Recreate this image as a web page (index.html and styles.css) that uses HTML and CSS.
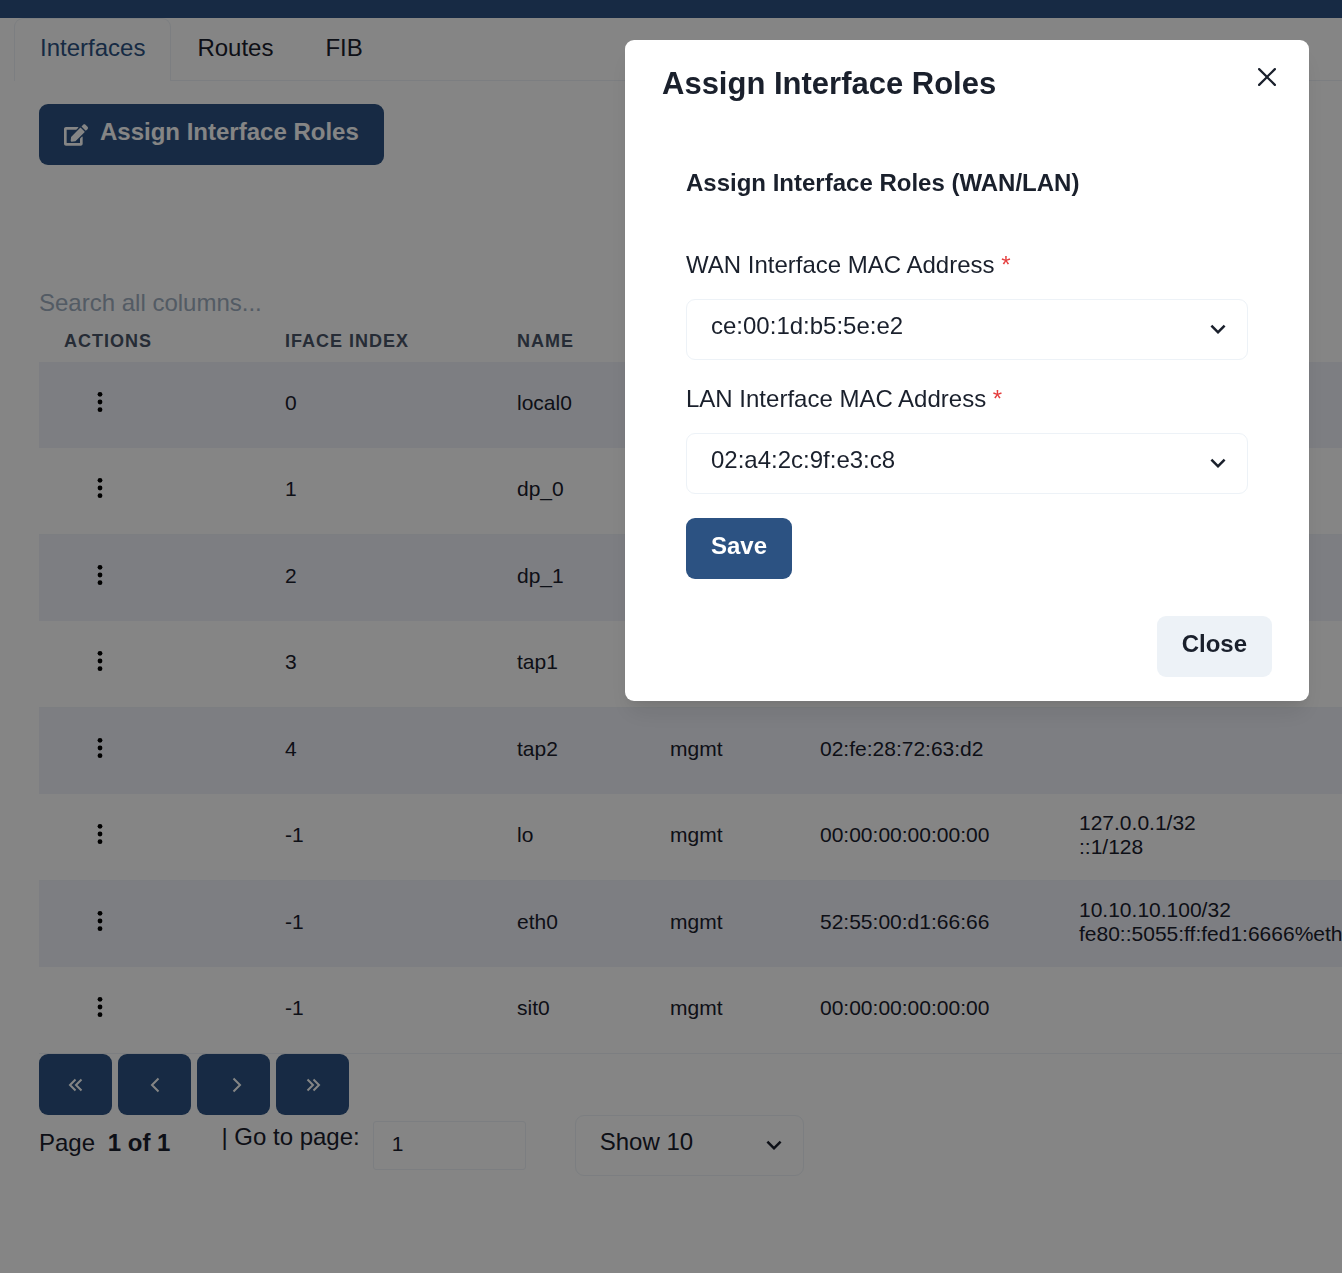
FILE: index.html
```html
<!DOCTYPE html>
<html lang="en">
<head>
    <meta charset="UTF-8">
    <meta name="viewport" content="width=device-width, initial-scale=1.0">
    <title>Interfaces</title>
    <link rel="stylesheet" href="styles.css">
</head>
<body>
    <!-- shared icons -->
    <svg class="icon-defs" aria-hidden="true">
        <symbol id="icon-chevron" viewBox="0 0 24 24">
            <path fill="currentColor" d="M16.59 8.59L12 13.17 7.41 8.59 6 10l6 6 6-6z"/>
        </symbol>
        <symbol id="icon-dots" viewBox="0 0 24 24">
            <circle cx="12" cy="4.3" r="2.4"/>
            <circle cx="12" cy="12" r="2.4"/>
            <circle cx="12" cy="19.7" r="2.4"/>
        </symbol>
    </svg>

    <header class="topbar"></header>

    <main class="page">
        <div class="tabs" role="tablist">
            <button class="tab active" role="tab" aria-selected="true">Interfaces</button>
            <button class="tab" role="tab" aria-selected="false">Routes</button>
            <button class="tab" role="tab" aria-selected="false">FIB</button>
        </div>

        <div class="panel">
            <button class="btn btn-primary">
                <svg class="edit-icon" viewBox="0 0 576 512"><path fill="currentColor" d="M402.6 83.2l90.2 90.2c3.8 3.8 3.8 10 0 13.8L274.4 405.6l-92.8 10.3c-12.4 1.4-22.9-9.1-21.5-21.5l10.3-92.8L388.8 83.2c3.8-3.8 10-3.8 13.8 0zm162-22.9l-48.8-48.8c-15.2-15.2-39.9-15.2-55.2 0l-35.4 35.4c-3.8 3.8-3.8 10 0 13.8l90.2 90.2c3.8 3.8 10 3.8 13.8 0l35.4-35.4c15.2-15.3 15.2-40 0-55.2zM384 346.2V448H64V128h229.8c3.2 0 6.2-1.3 8.5-3.5l40-40c7.6-7.6 2.2-20.5-8.5-20.5H48C21.5 64 0 85.5 0 112v352c0 26.5 21.5 48 48 48h352c26.5 0 48-21.5 48-48V306.2c0-10.7-12.9-16-20.5-8.5l-40 40c-2.2 2.3-3.5 5.3-3.5 8.5z"/></svg>
                <span class="btn-text">Assign Interface Roles</span>
            </button>

            <input class="search" type="text" placeholder="Search all columns..." aria-label="Search all columns">

            <table class="iface-table">
                <colgroup>
                    <col class="col-actions">
                    <col class="col-index">
                    <col class="col-name">
                    <col class="col-type">
                    <col class="col-mac">
                    <col class="col-ip">
                </colgroup>
                <thead>
                    <tr>
                        <th>Actions</th>
                        <th>Iface Index</th>
                        <th>Name</th>
                        <th>Type</th>
                        <th>MAC</th>
                        <th>IP</th>
                    </tr>
                </thead>
                <tbody>
                    <tr>
                        <td><button class="menu-btn" aria-label="Actions"><svg><use href="#icon-dots"/></svg></button></td>
                        <td>0</td>
                        <td>local0</td>
                        <td></td>
                        <td></td>
                        <td></td>
                    </tr>
                    <tr>
                        <td><button class="menu-btn" aria-label="Actions"><svg><use href="#icon-dots"/></svg></button></td>
                        <td>1</td>
                        <td>dp_0</td>
                        <td></td>
                        <td></td>
                        <td></td>
                    </tr>
                    <tr>
                        <td><button class="menu-btn" aria-label="Actions"><svg><use href="#icon-dots"/></svg></button></td>
                        <td>2</td>
                        <td>dp_1</td>
                        <td></td>
                        <td></td>
                        <td></td>
                    </tr>
                    <tr>
                        <td><button class="menu-btn" aria-label="Actions"><svg><use href="#icon-dots"/></svg></button></td>
                        <td>3</td>
                        <td>tap1</td>
                        <td></td>
                        <td></td>
                        <td></td>
                    </tr>
                    <tr>
                        <td><button class="menu-btn" aria-label="Actions"><svg><use href="#icon-dots"/></svg></button></td>
                        <td>4</td>
                        <td>tap2</td>
                        <td>mgmt</td>
                        <td>02:fe:28:72:63:d2</td>
                        <td></td>
                    </tr>
                    <tr>
                        <td><button class="menu-btn" aria-label="Actions"><svg><use href="#icon-dots"/></svg></button></td>
                        <td>-1</td>
                        <td>lo</td>
                        <td>mgmt</td>
                        <td>00:00:00:00:00:00</td>
                        <td>127.0.0.1/32<br>::1/128</td>
                    </tr>
                    <tr>
                        <td><button class="menu-btn" aria-label="Actions"><svg><use href="#icon-dots"/></svg></button></td>
                        <td>-1</td>
                        <td>eth0</td>
                        <td>mgmt</td>
                        <td>52:55:00:d1:66:66</td>
                        <td>10.10.10.100/32<br>fe80::5055:ff:fed1:6666%eth0</td>
                    </tr>
                    <tr>
                        <td><button class="menu-btn" aria-label="Actions"><svg><use href="#icon-dots"/></svg></button></td>
                        <td>-1</td>
                        <td>sit0</td>
                        <td>mgmt</td>
                        <td>00:00:00:00:00:00</td>
                        <td></td>
                    </tr>
                </tbody>
            </table>

            <div class="pager-buttons">
                <button class="btn btn-primary pager-btn" aria-label="First page"><svg viewBox="0 0 24 24"><path d="M11.5 6.5L6 12l5.5 5.5M17.5 6.5L12 12l5.5 5.5"/></svg></button>
                <button class="btn btn-primary pager-btn" aria-label="Previous page"><svg viewBox="0 0 24 24"><path d="M15.5 5.5L9 12l6.5 6.5"/></svg></button>
                <button class="btn btn-primary pager-btn" aria-label="Next page"><svg viewBox="0 0 24 24"><path d="M11.5 5.5L18 12l-6.5 6.5"/></svg></button>
                <button class="btn btn-primary pager-btn" aria-label="Last page"><svg viewBox="0 0 24 24"><path d="M6.5 6.5L12 12l-5.5 5.5M12.5 6.5L18 12l-5.5 5.5"/></svg></button>
            </div>

            <div class="pager">
                <span class="page-count">Page <strong>1 of 1</strong></span>
                <label class="goto-label" for="goto">| Go to page:</label>
                <input class="goto-input" id="goto" type="text" value="1">
                <div class="select-wrap page-size">
                    <select aria-label="Page size">
                        <option>Show 10</option>
                        <option>Show 20</option>
                        <option>Show 50</option>
                    </select>
                    <svg class="chevron"><use href="#icon-chevron"/></svg>
                </div>
            </div>
        </div>
    </main>

    <div class="overlay">
        <section class="modal" role="dialog" aria-modal="true" aria-labelledby="modal-title">
            <div class="modal-header">
                <h2 id="modal-title">Assign Interface Roles</h2>
                <button class="close-x" aria-label="Close dialog">
                    <svg viewBox="0 0 24 24"><path fill="currentColor" d="M.439,21.44a1.5,1.5,0,0,0,2.122,2.121L11.823,14.3a.25.25,0,0,1,.354,0l9.262,9.263a1.5,1.5,0,1,0,2.122-2.121L14.3,12.177a.25.25,0,0,1,0-.354l9.263-9.262A1.5,1.5,0,0,0,21.439.44L12.177,9.7a.25.25,0,0,1-.354,0L2.561.44A1.5,1.5,0,0,0,.439,2.561L9.7,11.823a.25.25,0,0,1,0,.354Z"/></svg>
                </button>
            </div>

            <form class="roles-form">
                <h3>Assign Interface Roles (WAN/LAN)</h3>

                <label for="wan">WAN Interface MAC Address <span class="required">*</span></label>
                <div class="select-wrap">
                    <select id="wan">
                        <option>ce:00:1d:b5:5e:e2</option>
                        <option>02:a4:2c:9f:e3:c8</option>
                    </select>
                    <svg class="chevron"><use href="#icon-chevron"/></svg>
                </div>

                <label for="lan">LAN Interface MAC Address <span class="required">*</span></label>
                <div class="select-wrap">
                    <select id="lan">
                        <option>02:a4:2c:9f:e3:c8</option>
                        <option>ce:00:1d:b5:5e:e2</option>
                    </select>
                    <svg class="chevron"><use href="#icon-chevron"/></svg>
                </div>

                <button class="btn btn-primary" type="button"><span class="btn-text">Save</span></button>
            </form>

            <div class="modal-footer">
                <button class="btn btn-light"><span class="btn-text">Close</span></button>
            </div>
        </section>
    </div>
</body>
</html>
```
FILE: styles.css
```css
:root {
    --primary: #2c5282;
    --text: #1a202c;
    --heading: #4a5568;
    --muted: #a0aec0;
    --border: #edf2f7;
    --stripe: #f0f2fa;
}

* {
    box-sizing: border-box;
}

body {
    margin: 0;
    font-family: "Liberation Sans", Arial, sans-serif;
    font-size: 24px;
    line-height: 36px;
    color: var(--text);
    background: white;
    overflow: hidden;
}

button, input, select {
    font: inherit;
    color: inherit;
    margin: 0;
}

button {
    cursor: pointer;
}

svg {
    display: block;
}

.icon-defs {
    position: absolute;
    width: 0;
    height: 0;
}

.topbar {
    height: 18px;
    background: var(--primary);
}

.page {
    padding-left: 14px;
    min-height: calc(100vh - 18px);
}

/* Tabs */
.tabs {
    display: flex;
    border-bottom: 1px solid var(--border);
}

.tab {
    padding: 11px 25px 15px;
    margin-bottom: -1px;
    background: none;
    border: 1px solid transparent;
    border-bottom: none;
    border-radius: 9px 9px 0 0;
}

.tab.active {
    color: var(--primary);
    background: white;
    border-color: var(--border);
}

.panel {
    padding: 23px 0 24px 25px;
}

/* Buttons */
.btn {
    display: inline-flex;
    align-items: center;
    justify-content: center;
    gap: 12px;
    height: 61px;
    padding: 0 25px;
    border: none;
    border-radius: 9px;
    font-weight: bold;
}

.btn-text {
    padding-bottom: 6px;
}

.btn-primary {
    background: var(--primary);
    color: white;
}

.btn-light {
    background: var(--border);
}

.edit-icon {
    width: 24px;
    height: 22px;
}

.search {
    display: block;
    width: 100%;
    margin-top: 120px;
    padding: 0;
    border: none;
    outline: none;
    background: none;
}

.search::placeholder {
    color: var(--muted);
    opacity: 1;
}

/* Interfaces table */
.iface-table {
    width: 100%;
    border-collapse: separate;
    border-spacing: 0;
    table-layout: fixed;
    font-size: 21px;
    line-height: 24px;
}

.col-actions { width: 221px; }
.col-index { width: 232px; }
.col-name { width: 153px; }
.col-type { width: 150px; }
.col-mac { width: 259px; }

.iface-table th {
    padding: 8px 25px 9px;
    text-align: left;
    text-transform: uppercase;
    font-size: 18px;
    letter-spacing: 1px;
    color: var(--heading);
}

.iface-table td {
    height: 86px;
    padding: 0 25px 4px;
    white-space: nowrap;
}

.iface-table tbody tr:nth-child(odd) td {
    background: var(--stripe);
}

.iface-table tbody tr:nth-child(even) td {
    height: 87px;
    border-bottom: 1px solid var(--border);
}

.menu-btn {
    display: flex;
    align-items: center;
    justify-content: center;
    width: 71px;
    height: 61px;
    padding: 0 0 2px;
    border: none;
    background: none;
}

.menu-btn svg {
    width: 24px;
    height: 24px;
}

/* Pagination */
.pager-buttons {
    display: flex;
    gap: 6px;
}

.pager-btn {
    width: 73px;
    padding: 0;
}

.pager-btn svg {
    width: 24px;
    height: 24px;
    fill: none;
    stroke: currentColor;
    stroke-width: 2;
}

.pager {
    display: flex;
    align-items: center;
}

.page-count {
    margin-right: 51px;
    padding-bottom: 6px;
}

.page-count strong {
    margin-left: 6px;
}

.goto-label {
    margin-right: 13px;
    padding-bottom: 18px;
}

.goto-input {
    width: 153px;
    height: 49px;
    margin-right: 49px;
    padding: 0 18px 4px;
    border: 1px solid var(--border);
    border-radius: 3px;
    background: white;
    font-size: 21px;
}

/* Selects */
.select-wrap {
    position: relative;
}

.select-wrap select {
    width: 100%;
    height: 61px;
    padding: 0 48px 7px 24px;
    appearance: none;
    border: 1px solid var(--border);
    border-radius: 9px;
    background: white;
}

.select-wrap .chevron {
    position: absolute;
    top: 15px;
    right: 15px;
    width: 30px;
    height: 30px;
    pointer-events: none;
}

.page-size {
    width: 229px;
}

/* Modal */
.overlay {
    position: fixed;
    inset: 0;
    display: flex;
    justify-content: flex-end;
    align-items: flex-start;
    padding: 40px 33px;
    background: rgba(0, 0, 0, 0.48);
}

.modal {
    width: 100%;
    max-width: 684px;
    border-radius: 9px;
    background: white;
    box-shadow: 0 15px 23px -5px rgba(0, 0, 0, 0.1), 0 6px 9px -3px rgba(0, 0, 0, 0.05);
}

.modal-header {
    display: flex;
    justify-content: space-between;
    padding: 12px 18px 24px 37px;
}

.modal-header h2 {
    margin: 12px 0 0;
    font-size: 31px;
    line-height: 40px;
}

.close-x {
    display: flex;
    align-items: center;
    justify-content: center;
    width: 49px;
    height: 49px;
    padding: 0;
    border: none;
    background: none;
}

.close-x svg {
    width: 18px;
    height: 18px;
}

.roles-form {
    padding: 37px 61px;
}

.roles-form h3 {
    margin: 0 0 49px;
    font-size: 24px;
}

.roles-form label {
    display: block;
    margin-bottom: 19px;
    line-height: 30px;
}

.roles-form .select-wrap {
    margin-bottom: 24px;
}

.roles-form .btn {
    display: flex;
}

.required {
    color: #e53e3e;
}

.modal-footer {
    display: flex;
    justify-content: flex-end;
    padding: 0 37px 24px;
}
```
